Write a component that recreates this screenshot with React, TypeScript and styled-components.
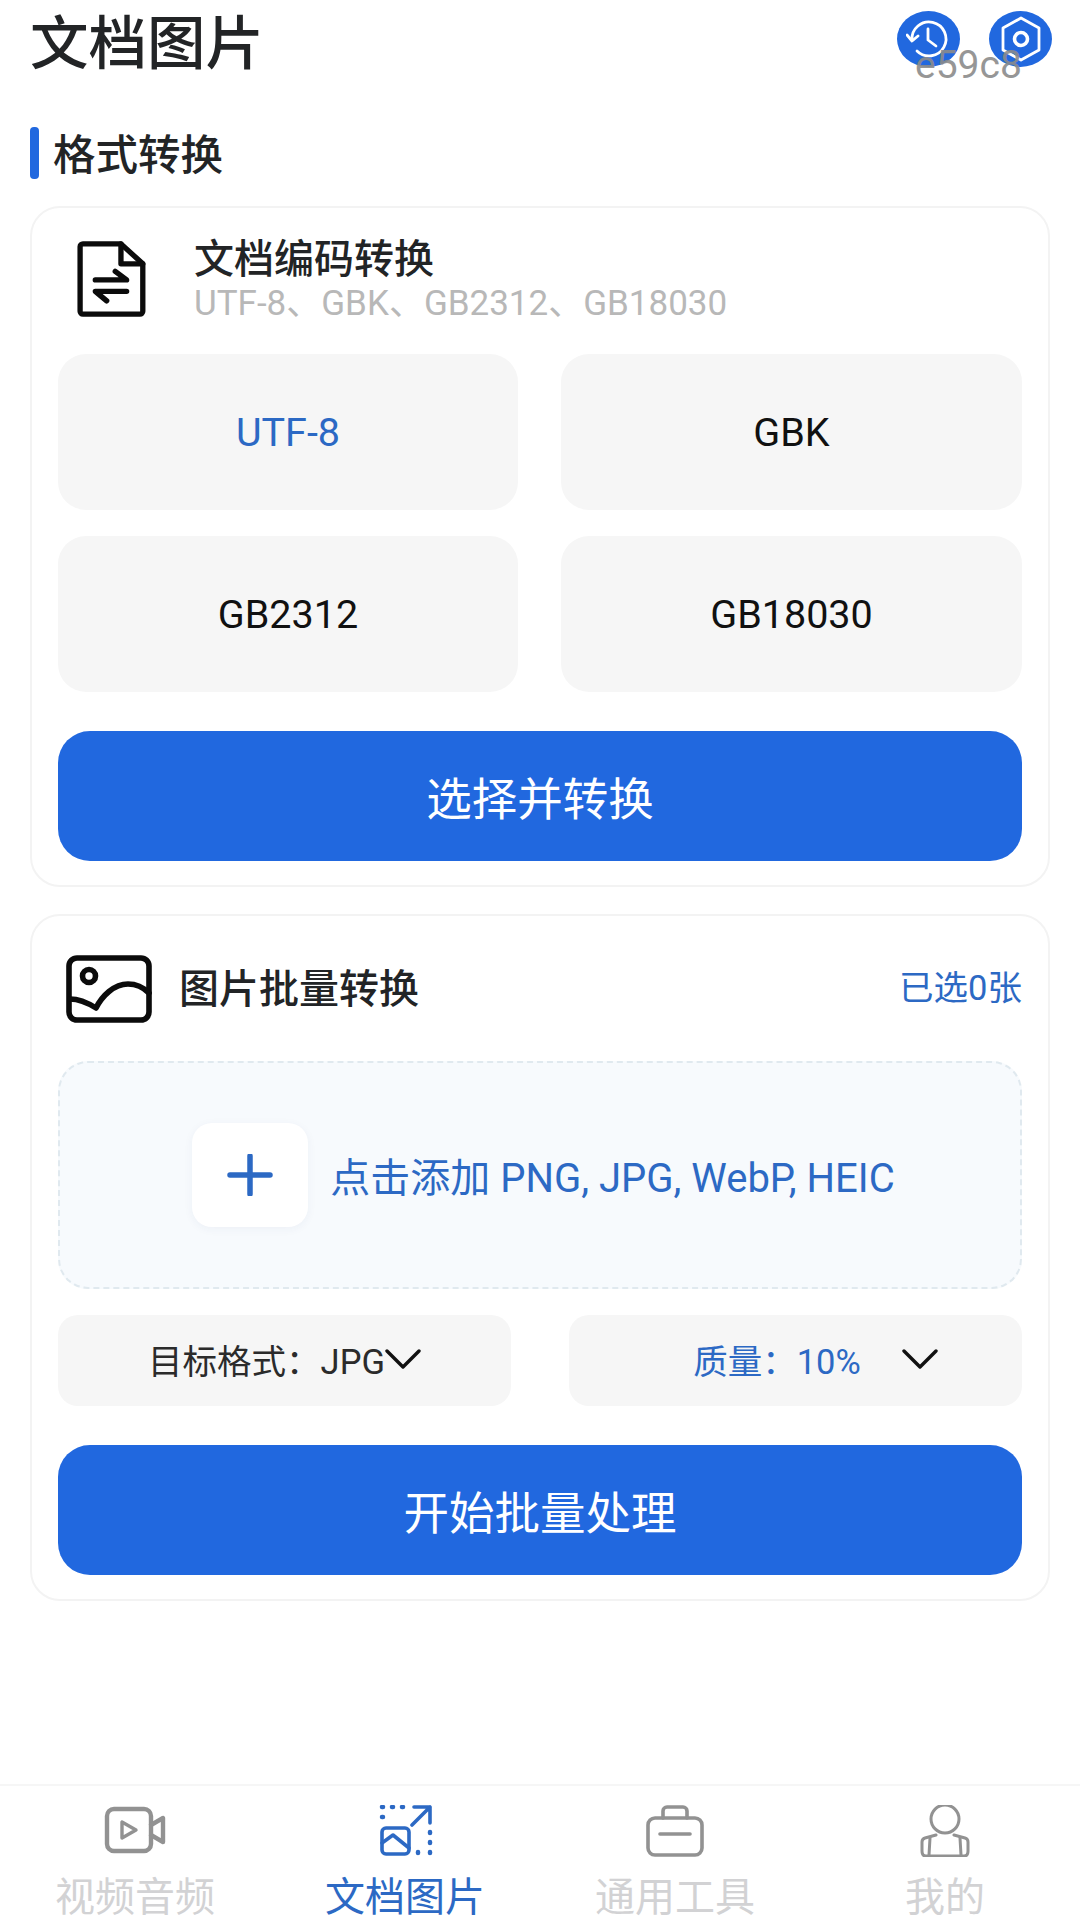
import styled, { createGlobalStyle } from "styled-components"

const GlobalStyle = createGlobalStyle`
  html, body {
    margin: 0;
    padding: 0;
    background: #ffffff;
  }
  * {
    box-sizing: border-box;
  }
`

const BLUE = "#2168df"
const TEXT_BLUE = "#2c69c4"
const FONT = `Roboto, "Noto Sans CJK SC", sans-serif`

const Page = styled.div`
  width: 1080px;
  height: 1920px;
  display: flex;
  flex-direction: column;
  overflow: hidden;
  background: #ffffff;
  font-family: ${FONT};
  color: #222426;
`

const Content = styled.main`
  flex: 1;
  padding: 0 30px;
  display: flex;
  flex-direction: column;
`

const Header = styled.header`
  height: 84px;
  display: flex;
  align-items: center;
  justify-content: space-between;
`

const Title = styled.h1`
  margin: 4px 0 0;
  font-size: 58.5px;
  line-height: 80px;
  font-weight: 500;
`

const HeaderActions = styled.div`
  position: relative;
  display: flex;
  gap: 29px;
  margin-top: -6px;
  margin-right: -2px;
`

const RoundButton = styled.button`
  width: 63px;
  height: 56px;
  border: none;
  padding: 0;
  border-radius: 50%;
  background: ${BLUE};
  display: flex;
  align-items: center;
  justify-content: center;
`

const ColorTag = styled.span`
  position: absolute;
  left: 18px;
  top: 31px;
  font-size: 39px;
  line-height: 46px;
  color: #8b8b8b;
  opacity: 0.9;
`

const SectionTitle = styled.h2`
  margin: 43px 0 27px;
  height: 52px;
  display: flex;
  align-items: flex-start;
  gap: 14px;
  font-size: 42.5px;
  font-weight: 500;
  line-height: 52px;
  &::before {
    content: "";
    width: 9px;
    height: 52px;
    border-radius: 4px;
    background: ${BLUE};
  }
`

const SectionLabel = styled.span`
  padding-top: 3px;
`

const Card = styled.section<{ $gap: number }>`
  border: 2px solid #f3f3f3;
  border-radius: 30px;
  padding: 0 26px 24px;
  display: flex;
  flex-direction: column;
  margin-bottom: ${(p) => p.$gap}px;
`

const EncodingHead = styled.div`
  height: 146px;
  display: flex;
  align-items: center;
  gap: 47px;
  padding: 0 0 4px 16px;
`

const HeadText = styled.div`
  display: flex;
  flex-direction: column;
`

const CardTitle = styled.div`
  font-size: 40px;
  line-height: 50px;
  font-weight: 500;
`

const CardSub = styled.div`
  font-size: 35px;
  line-height: 38px;
  color: #b8b8b8;
`

const ChipGrid = styled.div`
  display: grid;
  grid-template-columns: 460px 461px;
  column-gap: 43px;
  row-gap: 26px;
`

const Chip = styled.div<{ $active?: boolean }>`
  height: 156px;
  border-radius: 28px;
  background: #f6f6f6;
  display: flex;
  align-items: center;
  justify-content: center;
  font-size: 39.5px;
  color: ${(p) => (p.$active ? TEXT_BLUE : "#111111")};
`

const PrimaryButton = styled.button<{ $top: number }>`
  width: 100%;
  height: 130px;
  margin-top: ${(p) => p.$top}px;
  border: none;
  border-radius: 32px;
  background: ${BLUE};
  color: #ffffff;
  font-family: ${FONT};
  font-size: 45.5px;
`

const BatchHead = styled.div`
  height: 145px;
  display: flex;
  align-items: center;
  padding: 0 0 0 8px;
  gap: 27px;
`

const BatchTitle = styled(CardTitle)`
  flex: 1;
  padding-top: 2px;
`

const PickedCount = styled.span`
  font-size: 34.5px;
  padding-bottom: 7px;
  color: ${TEXT_BLUE};
`

const DropZone = styled.div`
  height: 228px;
  border: 2px dashed #e0e9ef;
  border-radius: 30px;
  background: #f7fafd;
  display: flex;
  align-items: center;
  justify-content: center;
  gap: 22px;
  padding-left: 7px;
  color: ${TEXT_BLUE};
  font-size: 40px;
`

const AddTile = styled.div`
  width: 116px;
  height: 104px;
  border-radius: 20px;
  background: #ffffff;
  box-shadow: 0 2px 10px rgba(30, 60, 110, 0.05);
  display: flex;
  align-items: center;
  justify-content: center;
`

const SelectRow = styled.div`
  display: grid;
  grid-template-columns: 453px 453px;
  justify-content: space-between;
  margin-top: 26px;
`

const Select = styled.div<{ $accent?: boolean; $spread: number; $inset: number }>`
  height: 91px;
  border-radius: 20px;
  background: #f6f6f6;
  display: flex;
  align-items: center;
  justify-content: center;
  gap: ${(p) => p.$spread}px;
  padding: 0 0 3px ${(p) => p.$inset}px;
  font-size: 34.5px;
  color: ${(p) => (p.$accent ? TEXT_BLUE : "#2b2b2b")};
`

const TabBar = styled.nav`
  height: 136px;
  border-top: 2px solid #f6f6f6;
  display: grid;
  grid-template-columns: 270px 270px 270px 270px;
`

const Tab = styled.div<{ $active?: boolean }>`
  display: flex;
  flex-direction: column;
  align-items: center;
  padding-top: 19px;
  gap: 15px;
  font-size: 40px;
  line-height: 52px;
  color: ${(p) => (p.$active ? TEXT_BLUE : "#d2d2d4")};
`

const TabIcon = styled.svg`
  width: 70px;
  height: 52px;
  display: block;
`

const Chevron = () => (
  <svg width="36" height="22" viewBox="0 0 36 22" fill="none" stroke="#111" strokeWidth="3.4" strokeLinecap="round" strokeLinejoin="round">
    <path d="M2 3l16 16L34 3" />
  </svg>
)

export default function App() {
  return (
    <Page>
      <GlobalStyle />
      <Content>
        <Header>
          <Title>文档图片</Title>
          <HeaderActions>
            <RoundButton>
              <svg width="46" height="46" viewBox="0 0 46 46" fill="none" stroke="#fff" strokeWidth="2.8" strokeLinecap="round" strokeLinejoin="round">
                <path d="M6 24A17 17 0 1 1 11 35" />
                <path d="M1 19l5 6 6-5" />
                <path d="M22 13v11l8 6" />
              </svg>
            </RoundButton>
            <RoundButton>
              <svg width="46" height="50" viewBox="0 0 46 50" fill="none" stroke="#fff" strokeWidth="2.8" strokeLinejoin="round">
                <path d="M23 4l18 10v22L23 46 5 36V14z" />
                <circle cx="23" cy="25" r="6.5" strokeWidth="3.6" />
              </svg>
            </RoundButton>
            <ColorTag>e59c8</ColorTag>
          </HeaderActions>
        </Header>

        <SectionTitle>
          <SectionLabel>格式转换</SectionLabel>
        </SectionTitle>

        <Card $gap={27}>
          <EncodingHead>
            <svg width="73" height="76" viewBox="0 0 74 80" fill="none" stroke="#0b0b0b" strokeWidth="5.6" strokeLinecap="round" strokeLinejoin="round">
              <path d="M8 3h40l23 21v50a3 3 0 0 1-3 3H8a3 3 0 0 1-3-3V6a3 3 0 0 1 3-3z" />
              <path d="M48 3v21h23" />
              <path d="M21 41h33l-12-9" />
              <path d="M54 53H21l12 10" />
            </svg>
            <HeadText>
              <CardTitle>文档编码转换</CardTitle>
              <CardSub>UTF-8、GBK、GB2312、GB18030</CardSub>
            </HeadText>
          </EncodingHead>
          <ChipGrid>
            <Chip $active>UTF-8</Chip>
            <Chip>GBK</Chip>
            <Chip>GB2312</Chip>
            <Chip>GB18030</Chip>
          </ChipGrid>
          <PrimaryButton $top={39}>选择并转换</PrimaryButton>
        </Card>

        <Card $gap={0}>
          <BatchHead>
            <svg width="86" height="68" viewBox="0 0 86 68" fill="none" stroke="#0b0b0b" strokeWidth="5.6" strokeLinecap="round" strokeLinejoin="round">
              <rect x="3" y="3" width="80" height="62" rx="8" />
              <circle cx="23" cy="21" r="6.5" />
              <path d="M4 44c10 0 18 4 26 9 6-12 18-24 32-24 9 0 15 3 21 9" />
            </svg>
            <BatchTitle>图片批量转换</BatchTitle>
            <PickedCount>已选0张</PickedCount>
          </BatchHead>
          <DropZone>
            <AddTile>
              <svg width="46" height="42" viewBox="0 0 46 42" fill="none" stroke={TEXT_BLUE} strokeWidth="5.5" strokeLinecap="round">
                <path d="M3 21h40M23 2v38" />
              </svg>
            </AddTile>
            点击添加 PNG, JPG, WebP, HEIC
          </DropZone>
          <SelectRow>
            <Select $spread={0} $inset={0}>
              目标格式：JPG
              <Chevron />
            </Select>
            <Select $accent $spread={41} $inset={40}>
              质量：10%
              <Chevron />
            </Select>
          </SelectRow>
          <PrimaryButton $top={39}>开始批量处理</PrimaryButton>
        </Card>
      </Content>

      <TabBar>
        <Tab>
          <TabIcon viewBox="0 0 70 52" fill="none" stroke="#929292" strokeWidth="4.4" strokeLinecap="round" strokeLinejoin="round">
            <rect x="7" y="4" width="44" height="42" rx="7" />
            <path d="M22 17v16l14-8z" strokeWidth="3.4" />
            <path d="M51 20l12-7v24l-12-7" />
          </TabIcon>
          视频音频
        </Tab>
        <Tab $active>
          <TabIcon viewBox="0 0 70 52" fill="none" stroke={TEXT_BLUE} strokeWidth="3.6" strokeLinecap="round" strokeLinejoin="round">
            <path d="M12 2h1M22 2h1M32 2h1M12 12h1" strokeWidth="4.5" />
            <path d="M44 2h16v16M60 2L42 20" />
            <rect x="12" y="23" width="27" height="26" rx="4" />
            <path d="M12 38l11-8 16 13" />
            <path d="M60 27v1M60 37v1M60 47v1M48 47v1" strokeWidth="4.5" />
          </TabIcon>
          文档图片
        </Tab>
        <Tab>
          <TabIcon viewBox="0 0 70 52" fill="none" stroke="#929292" strokeWidth="3.6" strokeLinecap="round" strokeLinejoin="round">
            <rect x="8" y="13" width="54" height="37" rx="7" />
            <path d="M23 13V6a4 4 0 0 1 4-4h16a4 4 0 0 1 4 4v7" />
            <path d="M20 29h30" />
          </TabIcon>
          通用工具
        </Tab>
        <Tab>
          <TabIcon viewBox="0 0 70 52" fill="none" stroke="#929292" strokeWidth="3" strokeLinecap="round" strokeLinejoin="round">
            <circle cx="35" cy="14" r="14" />
            <path d="M26 30l-11 3c-2 .5-3 2-3 4v9c0 3 1 5 4 5h38c3 0 4-2 4-5v-9c0-2-1-3.5-3-4l-11-3" />
            <path d="M20 33l-1 17M50 33l1 17" />
          </TabIcon>
          我的
        </Tab>
      </TabBar>
    </Page>
  )
}
